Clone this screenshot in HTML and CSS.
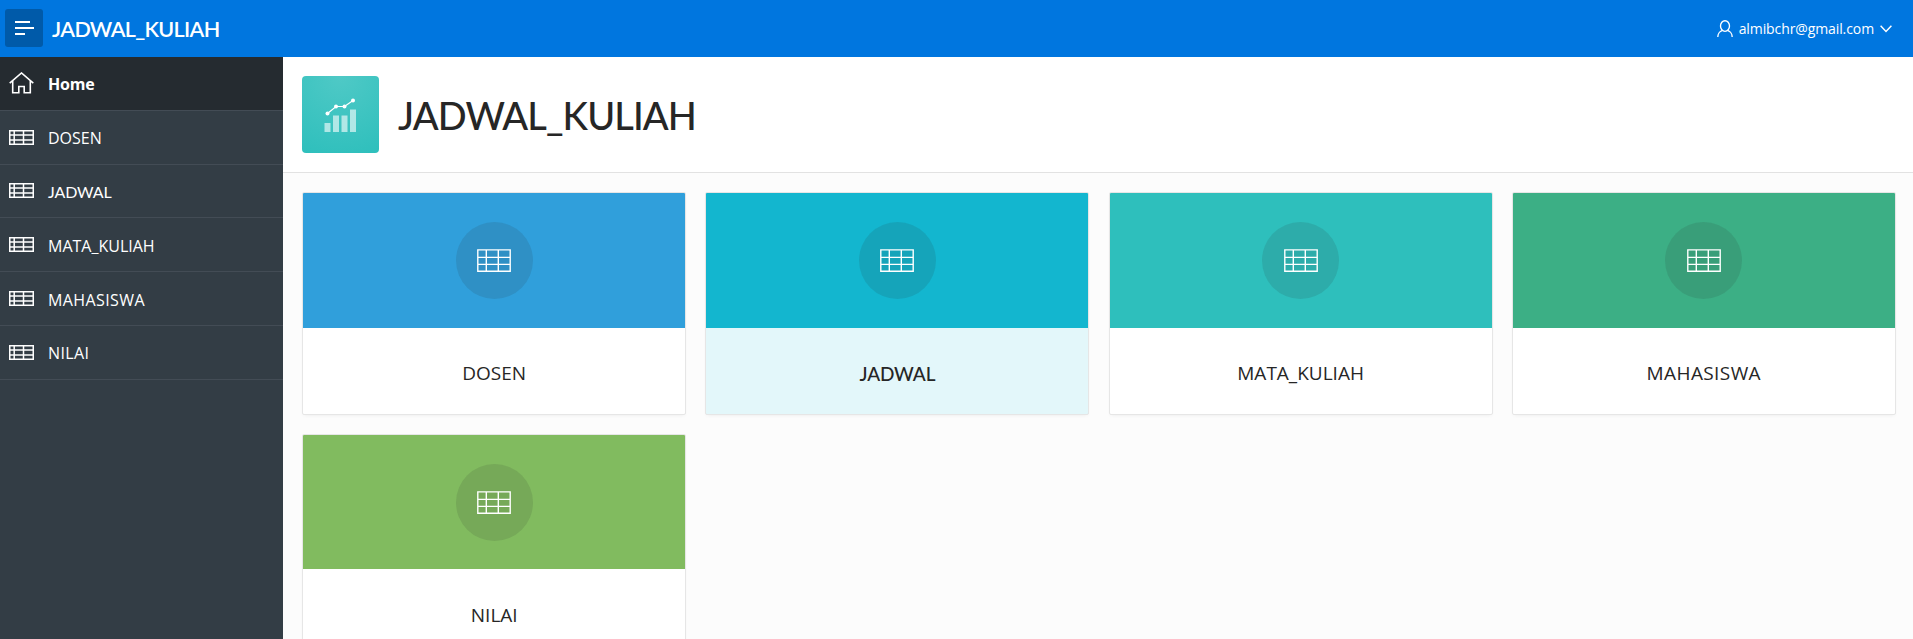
FILE: index.html
```html
<!DOCTYPE html>
<html lang="id">
<head>
<meta charset="utf-8">
<title>JADWAL_KULIAH</title>
<link rel="stylesheet" href="styles.css">
</head>
<body>
<svg class="defs" width="0" height="0">
  <symbol id="table-small" viewBox="0 0 25 15"><path d="M.75.75h23.5v13.5H.75zM.75 5.1h23.5M.75 9.9h23.5M5.2.75v13.5M14.5.75v13.5" fill="none" stroke="currentColor" stroke-width="1.5"/></symbol>
  <symbol id="table-large" viewBox="0 0 34 23"><path d="M.8.9h32.4v21.4H.8zM.8 8.4h32.4M.8 15.4h32.4M9.3.9v21.4M21.3.9v21.4" fill="none" stroke="currentColor" stroke-width="1.4"/></symbol>
</svg>
<header class="header">
  <button class="toggle" aria-label="Menu"><svg width="19" height="14" viewBox="0 0 19 14"><path d="M0 1h15M0 7h19M0 13h10" stroke="#fff" stroke-width="2"/></svg></button>
  <span class="logo">JADWAL_KULIAH</span>
  <div class="user">
    <svg width="16" height="18" viewBox="0 0 16 18" fill="none" stroke="currentColor" stroke-width="1.35"><ellipse cx="8" cy="6" rx="4.500" ry="5.300"/><path d="M5.400 10.400C3 11.500.9 12.500.8 17M10.600 10.400c2.400 1.100 4.500 2.100 4.600 6.600"/></svg>
    <span class="email">almibchr@gmail.com</span>
    <svg width="12" height="8" viewBox="0 0 12 8"><path d="M.6.8 6 6.400 11.400.8" fill="none" stroke="currentColor" stroke-width="1.500"/></svg>
  </div>
</header>
<div class="layout">
  <nav class="nav">
    <a class="nav-item current"><svg width="25" height="22" viewBox="0 0 25 22"><path d="M.7 11.200 12.500 1l11.800 10.200M3.700 9v11.800h6.100v-6.300h5.400v6.300h6.100V9" fill="none" stroke="currentColor" stroke-width="1.600"/></svg><span>Home</span></a>
    <a class="nav-item"><svg width="25" height="15"><use href="#table-small"/></svg><span>DOSEN</span></a>
    <a class="nav-item"><svg width="25" height="15"><use href="#table-small"/></svg><span class="j-text">JADWAL</span></a>
    <a class="nav-item"><svg width="25" height="15"><use href="#table-small"/></svg><span>MATA_KULIAH</span></a>
    <a class="nav-item"><svg width="25" height="15"><use href="#table-small"/></svg><span class="spaced">MAHASISWA</span></a>
    <a class="nav-item"><svg width="25" height="15"><use href="#table-small"/></svg><span class="spaced">NILAI</span></a>
  </nav>
  <main class="main">
    <section class="hero">
      <div class="app-icon"><svg width="33" height="36" viewBox="0 0 33 36"><path d="M.5 26h6v9h-6zM9 18.500h6V35H9zM17.500 18.500h6V35h-6zM26 12.500h6V35h-6z" fill="#fff" fill-opacity=".6"/><path d="M3.500 16.500 12 9.500h8.500L29 3.500" fill="none" stroke="#fff" stroke-width="1.200"/><g fill="#fff"><circle cx="3.500" cy="16.500" r="2"/><circle cx="12" cy="9.500" r="2"/><circle cx="20.500" cy="9.500" r="2"/><circle cx="29" cy="3.500" r="2"/></g></svg></div>
      <h1 class="title">JADWAL_KULIAH</h1>
    </section>
    <section class="cards">
      <a class="card"><div class="band blue"><div class="circle"><svg width="34" height="23"><use href="#table-large"/></svg></div></div><h3 class="label">DOSEN</h3></a>
      <a class="card hovered"><div class="band cyan"><div class="circle"><svg width="34" height="23"><use href="#table-large"/></svg></div></div><h3 class="label j-text">JADWAL</h3></a>
      <a class="card"><div class="band teal"><div class="circle"><svg width="34" height="23"><use href="#table-large"/></svg></div></div><h3 class="label">MATA_KULIAH</h3></a>
      <a class="card"><div class="band green"><div class="circle"><svg width="34" height="23"><use href="#table-large"/></svg></div></div><h3 class="label spaced">MAHASISWA</h3></a>
      <a class="card"><div class="band lime"><div class="circle"><svg width="34" height="23"><use href="#table-large"/></svg></div></div><h3 class="label">NILAI</h3></a>
    </section>
  </main>
</div>
</body>
</html>
```
FILE: styles.css
```css
* { box-sizing: border-box; }
body {
  margin: 0;
  height: 639px;
  overflow: hidden;
  display: flex;
  flex-direction: column;
  background: #fcfcfc;
  color: #262626;
  font-family: "Open Sans", "Noto Sans", sans-serif;
}
.defs { display: none; }
svg { display: block; flex: none; }

.header {
  height: 57px;
  flex: none;
  display: flex;
  align-items: center;
  padding: 0 21px 0 5px;
  background: #0076df;
  color: #fff;
}
.toggle {
  width: 38px;
  height: 38px;
  margin: 0 0 1px;
  padding: 0;
  border: 0;
  border-radius: 3px;
  background: #005aa9;
  display: flex;
  align-items: center;
  justify-content: center;
}
.logo {
  margin-left: 9px;
  font-family: Lato, sans-serif;
  font-size: 21.500px;
  font-weight: 600;
  line-height: 30px;
  letter-spacing: -.65px;
}
.user {
  margin-left: auto;
  display: flex;
  align-items: center;
  gap: 6px;
}
.email { font-size: 14px; line-height: 20px; letter-spacing: -.1px; }

.layout { flex: 1; min-height: 0; display: flex; }
.nav { width: 283px; flex: none; background: #333d45; color: #fff; }
.nav-item {
  height: 53.800px;
  display: flex;
  align-items: center;
  gap: 14px;
  padding: 0 9px;
  border-bottom: 1px solid #434c55;
  font-size: 16px;
}
.nav-item span { padding-top: 2px; }
.nav-item.current { background: #252b30; font-weight: 700; letter-spacing: -.2px; }
.spaced { letter-spacing: .4px; }
.j-text { font-family: Lato, sans-serif; letter-spacing: -.15px; }

.main { flex: 1; min-width: 0; }
.hero {
  height: 116px;
  display: flex;
  align-items: center;
  gap: 19px;
  padding: 0 19px;
  background: #fff;
  border-bottom: 1px solid #e2e2e2;
}
.app-icon {
  width: 77px;
  height: 77px;
  border-radius: 4px;
  display: flex;
  align-items: center;
  justify-content: center;
  background: radial-gradient(circle at 50% 0, #4fc9c6, #2ebfbc);
}
.title {
  margin: 0;
  font-family: Lato, sans-serif;
  font-size: 38px;
  font-weight: 500;
  line-height: 48px;
  letter-spacing: -.9px;
}
.cards {
  display: grid;
  grid-template-columns: repeat(4, 1fr);
  gap: 19.400px 19.200px;
  padding: 19.400px 17.200px 0 19.200px;
}
.card {
  height: 222.200px;
  display: flex;
  flex-direction: column;
  overflow: hidden;
  background: #fff;
  border: 1px solid #e6e6e6;
  border-radius: 2px;
  box-shadow: 0 2px 4px -2px rgba(0, 0, 0, .08);
}
.card.hovered { background: #e3f7fa; }
.band {
  height: 134.400px;
  flex: none;
  display: flex;
  align-items: center;
  justify-content: center;
}
.circle {
  width: 76.800px;
  height: 76.800px;
  border-radius: 50%;
  display: flex;
  align-items: center;
  justify-content: center;
  background: rgba(38, 38, 38, .12);
  color: #fff;
}
.blue { background: #309fdb; }
.cyan { background: #13b6cf; }
.teal { background: #2ebfbc; }
.green { background: #3caf85; }
.lime { background: #81bb5f; }
.label {
  flex: 1;
  margin: 0;
  display: flex;
  align-items: center;
  justify-content: center;
  padding-top: 5px;
  font-size: 19px;
  font-weight: 500;
}
```
